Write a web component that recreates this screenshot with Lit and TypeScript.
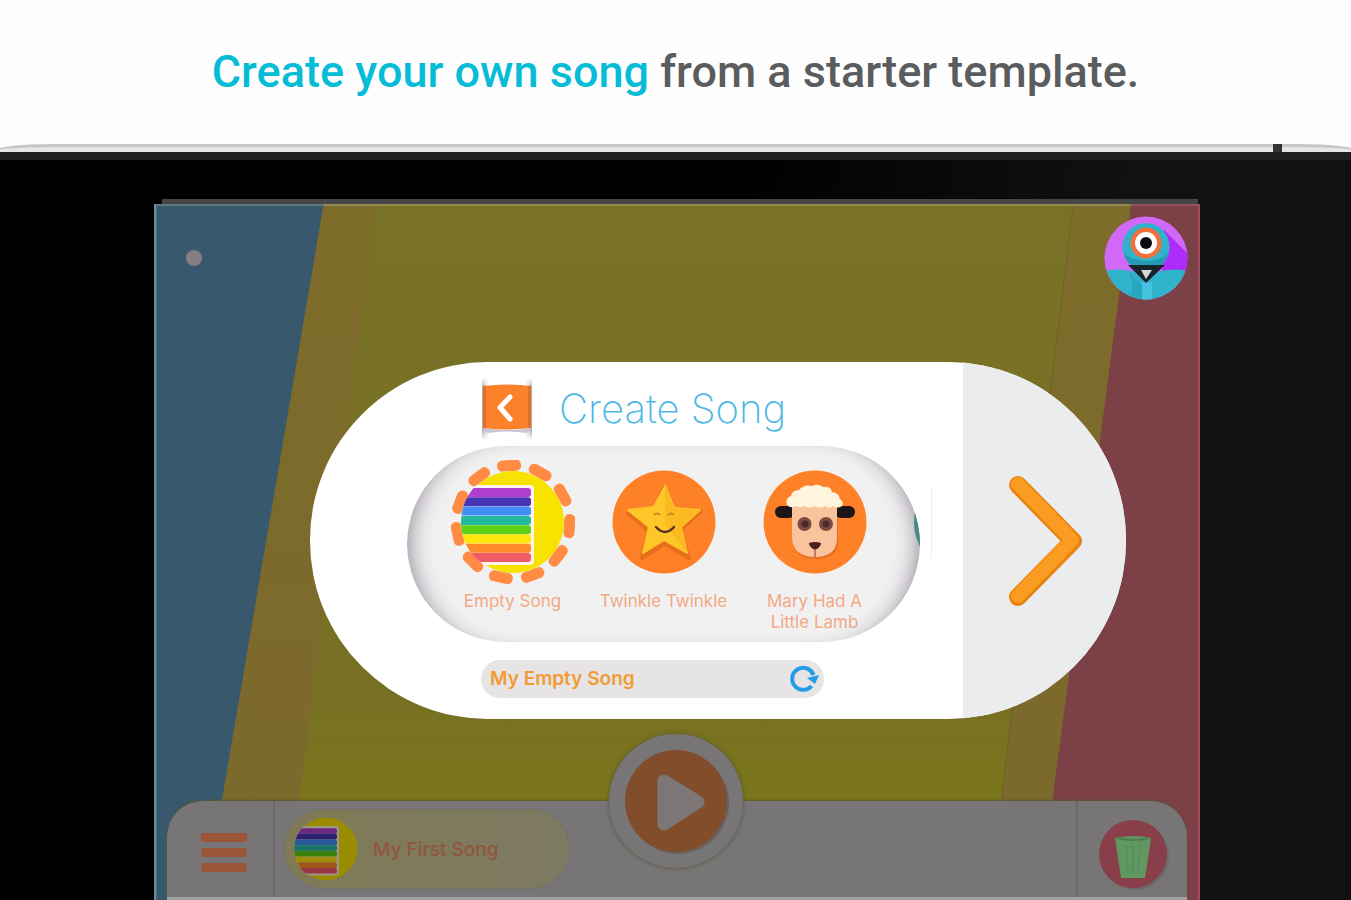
import { LitElement, html, css, svg } from "lit";
import { customElement, state } from "lit/decorators.js";

const STRIPES = ["#b03fd0", "#4a35b5", "#3f8ff5", "#25b9a0", "#5fd018", "#ffe60a", "#ff8a2a", "#f25a68"];

const emptySongArt = () => svg`
  <circle cx="62" cy="62" r="51" fill="#f7e200"></circle>
  <clipPath id="disc"><circle cx="62" cy="62" r="52"></circle></clipPath>
  <g clip-path="url(#disc)">
    <rect x="0" y="25" width="83" height="80" rx="4" fill="#fff3ec"></rect>
    ${STRIPES.map((c, i) => svg`<rect x="4" y=${28 + i * 9.3} width="76" height="9" rx="3" fill=${c}></rect>`)}
  </g>`;

@customElement("song-art")
class SongArt extends LitElement {
  static properties = { kind: { type: String } };
  declare kind: string;

  static styles = css`
    :host { display: block; width: 124px; height: 124px; }
    svg { display: block; width: 100%; height: 100%; }
  `;

  private art() {
    switch (this.kind) {
      case "selected":
        return svg`${Array.from({ length: 11 }, (_, i) => svg`
            <rect x="50" y="0" width="24" height="11" rx="5" fill="#ff8c42"
              transform="rotate(${-4 + (i * 360) / 11} 62 62)"></rect>`)}
          ${emptySongArt()}`;
      case "empty":
        return emptySongArt();
      case "star":
        return svg`<circle cx="62" cy="62" r="51.5" fill="#ff8127"></circle>
          <path d="M62 28 L71 50 L99 51 L78 70 L87 98 L63 84 L40 98 L46 71 L26 53 L52 50Z" fill="#e8701c" stroke="#e8701c" stroke-width="4" stroke-linejoin="round"></path>
          <path d="M63 26 L72 48 L98 50 L79 67 L85 93 L62 80 L41 93 L47 67 L26 50 L52 47Z" fill="#ffc629" stroke="#ffc629" stroke-width="2" stroke-linejoin="round"></path>
          <path d="M63 26 L63 64 L85 93 L79 67 L98 50 L72 48Z" fill="#fbb922"></path>
          <path d="M52 55q3-3 6 0M66 55q3-3 6 0" fill="none" stroke="#c98a20" stroke-width="2"></path>
          <path d="M54 67q9 10 18 0" fill="none" stroke="#5a3226" stroke-width="2.5" stroke-linecap="round"></path>`;
      case "lamb":
        return svg`<circle cx="62" cy="62" r="51.5" fill="#ff8127"></circle>
          <path d="M40 50h45v32q0 17-22 17T40 82z" fill="#e2701f"></path>
          <rect x="22" y="46" width="20" height="12" rx="6" fill="#1d1617"></rect>
          <rect x="82" y="46" width="20" height="12" rx="6" fill="#1d1617"></rect>
          <path d="M39 38h45v40q0 19-22 19T39 78z" fill="#f9c39d"></path>
          <path d="M34 45q-2-7 4-9 1-6 8-6 5-6 13-4 6-3 11 1 8-1 9 5 7 1 8 7 4 3 2 7-4 3-9 0-4 3-8 0-5 3-10 0-6 3-10 0-6 2-10 0-4 3-8-1z" fill="#fff5dc"></path>
          <circle cx="51.5" cy="64" r="7" fill="#7d4a42"></circle><circle cx="73" cy="64" r="7" fill="#7d4a42"></circle>
          <circle cx="52" cy="64" r="3.5" fill="#4a2a2b"></circle><circle cx="73" cy="64" r="3.5" fill="#4a2a2b"></circle>
          <path d="M56 83q6-2 12 0 0 4-6 7-6-3-6-7z" fill="#4a201c"></path>
          <path d="M62 89v8" stroke="#a9694d" stroke-width="1.5"></path>`;
      default:
        return svg`<circle cx="62" cy="62" r="52" fill="#149b74"></circle>`;
    }
  }

  render() {
    return html`<svg viewBox="0 0 124 124" aria-hidden="true">${this.art()}</svg>`;
  }
}

const TEMPLATES = [
  { name: "Empty Song", art: "selected" },
  { name: "Twinkle Twinkle", art: "star" },
  { name: "Mary Had A Little Lamb", art: "lamb" },
  { name: "", art: "more" },
];

@customElement("app-root")
class AppRoot extends LitElement {
  @state() songName = "My Empty Song";

  static styles = css`
    :host {
      display: flex;
      flex-direction: column;
      min-height: 100vh;
      background: #fefefe;
      font-family: Inter, "Open Sans", sans-serif;
      overflow: hidden;
    }
    * { box-sizing: border-box; }
    button { border: 0; padding: 0; background: none; font: inherit; color: inherit; cursor: pointer; }
    svg { display: block; }

    .headline {
      margin: 0;
      height: 144px;
      text-align: center;
      font: 500 45px/144px Roboto, sans-serif;
      color: #5b5c5e;
    }
    .headline em { font-style: normal; color: #06bcd6; }

    .device {
      position: relative;
      flex: 1;
      display: flex;
      flex-direction: column;
      margin: 0 -8px;
      padding: 46px 159px 0 162px;
      border-top: 3px solid #c6c6c6;
      border-radius: 60px 60px 0 0 / 8px 8px 0 0;
      background: linear-gradient(#e6e6e6 0 5px, #1e1e1e 5px 13px, transparent 13px),
        linear-gradient(100deg, #000 50%, #111 76%);
    }
    .notch { position: absolute; right: 77px; top: -3px; width: 9px; height: 8px; background: #333; }
    .bezel { height: 5px; margin: 6px 2px 0 8px; background: #464646; }

    .screen {
      position: relative;
      flex: 1;
      display: flex;
      flex-direction: column;
      border-right: 2px solid #a54a5e;
      overflow: hidden;
    }
    .backdrop { position: absolute; inset: 0; width: 100%; height: 100%; }
    .topbar {
      position: relative;
      display: flex;
      justify-content: space-between;
      align-items: center;
      padding: 12px 10px 0 32px;
    }
    .dot { width: 16px; height: 16px; border-radius: 50%; background: #857d84; }
    .avatar { width: 84px; height: 84px; }

    .dialog {
      position: relative;
      display: flex;
      margin: 62px 72px 24px 156px;
      height: 357px;
      border-radius: 178px;
      background: #fff;
      overflow: hidden;
    }
    .main { flex: 1; padding: 14px 0 0 97px; }
    .title { display: flex; align-items: center; gap: 27px; padding-left: 75px; height: 66px; }
    .back { width: 50px; height: 62px; }
    .title h2 { margin: 0; font: 200 40px/66px Inter, sans-serif; color: #4cb8e6; }
    .tray {
      display: flex;
      width: 513px;
      height: 196px;
      margin: 4px 0 18px;
      padding: 14px 0 0 30px;
      border-radius: 98px;
      background: #f1f1f1;
      overflow: hidden;
      position: relative;
    }
    .tray::after {
      content: "";
      position: absolute;
      inset: 0;
      border-radius: 98px;
      box-shadow: inset 20px 0 24px -20px #85778a, inset -20px 0 24px -20px #85778a;
      pointer-events: none;
    }
    .song {
      flex: 0 0 151px;
      display: flex;
      flex-direction: column;
      align-items: center;
      font-size: 17px;
      line-height: 21px;
      color: #f2a985;
    }
    .song span { width: 144px; margin-top: 7px; text-align: center; }
    .song:nth-child(3) span { width: 112px; }
    .rule { position: absolute; left: 621px; top: 125px; width: 1px; height: 72px; background: #f0f0f0; }
    .name {
      display: flex;
      align-items: center;
      width: 343px;
      height: 38px;
      margin-left: 74px;
      padding: 0 5px 0 9px;
      border-radius: 19px;
      background: #e6e4e5;
    }
    .name input {
      flex: 1;
      min-width: 0;
      border: 0;
      padding: 0;
      background: none;
      outline: 0;
      font: 600 19px/36px Inter, sans-serif;
      color: #f29b35;
    }
    .next {
      flex: 0 0 163px;
      display: grid;
      place-items: center;
      background: #ebecee;
    }

    .dock {
      position: relative;
      display: flex;
      margin: auto 11px 0 13px;
      height: 99px;
      border-bottom: 3px solid #a3a2a3;
      border-radius: 36px 36px 0 0;
      background: #777576;
      box-shadow: 0 -1px 2px #5b5733;
    }
    .menu { flex: 0 0 108px; display: grid; place-items: center; padding: 8px 0 0 8px; border-right: 2px solid #6b696a; }
    .current {
      display: flex;
      align-items: center;
      gap: 9px;
      width: 284px;
      height: 78px;
      margin: 9px 0 0 10px;
      padding-left: 3px;
      border-radius: 39px;
      background: linear-gradient(90deg, #7f7a55, #7d7a62);
      box-shadow: 0 0 3px #716f4e;
      font-size: 19px;
      font-weight: 500;
      color: #94553f;
    }
    .current song-art { width: 76px; height: 76px; filter: brightness(0.62); }
    .trash { flex: 0 0 111px; display: grid; place-items: center; margin-left: auto; padding: 10px 0 0 0; border-left: 2px solid #6a6869; }
    .play {
      position: absolute;
      left: calc(50% - 68px);
      top: -67px;
      width: 134px;
      height: 134px;
      border-radius: 50%;
      background: #777576;
      box-shadow: 0 0 4px #575532;
    }
  `;

  private backdrop() {
    return html`<svg class="backdrop" viewBox="0 0 1046 696" preserveAspectRatio="none" aria-hidden="true">
      <defs>
        <linearGradient id="y" x1="0" y1="0" x2="0" y2="1"><stop offset="0" stop-color="#797226"></stop><stop offset=".7" stop-color="#777024"></stop><stop offset=".86" stop-color="#7b761c"></stop></linearGradient>
        <linearGradient id="b" x1="0" y1="0" x2="0" y2="1"><stop offset="0" stop-color="#7d6c2a"></stop><stop offset=".86" stop-color="#7c692c"></stop></linearGradient>
      </defs>
      <rect width="1046" height="696" fill="#37586d"></rect>
      <path d="M170 0H979V696H51z" fill="url(#b)"></path>
      <path d="M222 0H921L837 696H133z" fill="url(#y)"></path>
      <path d="M921 0L837 696" stroke="#6c6325" stroke-width="1"></path>
      <path d="M979 0H1046V696H887z" fill="#7b4147"></path>
      <path d="M0 1H170" stroke="#5d7781" stroke-width="2"></path>
      <path d="M170 1H979" stroke="#918a50" stroke-width="2"></path>
      <path d="M979 1H1046" stroke="#95525f" stroke-width="2"></path>
      <path d="M1 0V696" stroke="#6a8b99" stroke-width="3"></path>
    </svg>`;
  }

  private avatar() {
    return html`<svg class="avatar" viewBox="0 0 84 84" role="img" aria-label="Robot">
      <defs><clipPath id="a"><circle cx="42" cy="42" r="41.5"></circle></clipPath></defs>
      <g clip-path="url(#a)">
        <rect width="84" height="84" fill="#d168f8"></rect>
        <path d="M60 14L84 38V60H58z" fill="#ad2cfa"></path>
        <path d="M0 55Q12 52 28 55L42 62 56 55Q72 52 84 55V84H0z" fill="#2fb4cb"></path>
        <path d="M24 55L38 69V84H24Q32 72 24 55z" fill="#29a6c0"></path>
        <path d="M38 66H48V84H38z" fill="#46c1e0"></path>
        <ellipse cx="42" cy="31" rx="23.5" ry="24" fill="#31b2cb"></ellipse>
        <path d="M20 38q22 14 44 0-4 16-22 17-17-1-22-17z" fill="#259ab5"></path>
        <path d="M24 49H61L42 67z" fill="#18232c"></path>
        <path d="M37 54H48L42 63z" fill="#d4dad3"></path>
      </g>
      <circle cx="42" cy="27" r="15.5" fill="#f0713c"></circle>
      <circle cx="42" cy="27" r="11" fill="#fff"></circle>
      <circle cx="42" cy="27" r="6" fill="#0a0a10"></circle>
    </svg>`;
  }

  render() {
    return html`
      <h1 class="headline"><em>Create your own song</em> from a starter template.</h1>
      <div class="device">
        <i class="notch"></i>
        <div class="bezel"></div>
        <main class="screen">
          ${this.backdrop()}
          <div class="topbar"><i class="dot"></i>${this.avatar()}</div>

          <section class="dialog">
            <div class="main">
              <div class="title">
                <button class="back" aria-label="Back">
                  <svg width="50" height="62" viewBox="0 0 50 62">
                    <defs>
                      <linearGradient id="fold" x1="0" y1="0" x2="1" y2="0">
                        <stop offset="0" stop-color="#a9a6b4"></stop><stop offset=".14" stop-color="#fff"></stop>
                        <stop offset=".86" stop-color="#fff"></stop><stop offset="1" stop-color="#a9a6b4"></stop>
                      </linearGradient>
                      <linearGradient id="fade" x1="0" y1="0" x2="0" y2="1">
                        <stop offset="0" stop-color="#fff"></stop><stop offset=".15" stop-color="#fff" stop-opacity="0"></stop>
                        <stop offset=".85" stop-color="#fff" stop-opacity="0"></stop><stop offset="1" stop-color="#fff"></stop>
                      </linearGradient>
                    </defs>
                    <rect width="50" height="62" fill="url(#fold)"></rect>
                    <rect width="50" height="62" fill="url(#fade)"></rect>
                    <path d="M1 50Q25 54 49 50L45 55Q25 52 5 55z" fill="#c9c6d4"></path>
                    <path d="M1 8Q25 5 49 8V50Q25 53 1 50z" fill="#fb812b"></path>
                    <path d="M1 8H4V50H1zM46 8H49V50H46z" fill="#c9601f" opacity=".5"></path>
                    <path d="M28 19L18 29.5 28 41" fill="none" stroke="#fff" stroke-width="5" stroke-linecap="round" stroke-linejoin="round"></path>
                  </svg>
                </button>
                <h2>Create Song</h2>
              </div>
              <div class="tray">
                ${TEMPLATES.map((t) => html`<button class="song" aria-label=${t.name || "More"}>
                  <song-art kind=${t.art}></song-art><span>${t.name}</span>
                </button>`)}
              </div>
              <i class="rule"></i>
              <div class="name">
                <input aria-label="Song name" .value=${this.songName} />
                <button aria-label="New name" @click=${() => (this.songName = "My Empty Song")}>
                  <svg width="30" height="30" viewBox="0 0 30 30">
                    <path d="M22.5 22A11 11 0 1 1 24.5 11" fill="none" stroke="#239be9" stroke-width="4"></path>
                    <path d="M18 14L30 11 26 20z" fill="#239be9"></path>
                  </svg>
                </button>
              </div>
            </div>
            <button class="next" aria-label="Next">
              <svg width="76" height="134" viewBox="0 0 76 134">
                <path d="M11 11L66 67 11 123" fill="none" stroke="#e8830f" stroke-width="18" stroke-linecap="round" stroke-linejoin="round"></path>
                <path d="M11 10L65 66 11 122" fill="none" stroke="#fa9c22" stroke-width="14" stroke-linecap="round" stroke-linejoin="round"></path>
              </svg>
            </button>
          </section>

          <footer class="dock">
            <button class="menu" aria-label="Menu">
              <svg width="48" height="44" viewBox="0 0 48 44" fill="#9b5639">
                <rect x="1" y="2" width="46" height="9" rx="2"></rect>
                <rect x="1" y="17" width="46" height="9" rx="2"></rect>
                <rect x="1" y="32" width="46" height="9" rx="2"></rect>
              </svg>
            </button>
            <button class="current"><song-art kind="empty"></song-art>My First Song</button>
            <button class="trash" aria-label="Delete">
              <svg width="72" height="72" viewBox="0 0 72 72">
                <circle cx="38" cy="38" r="34" fill="#6c6a6b"></circle>
                <circle cx="36" cy="36" r="34" fill="#883f49"></circle>
                <path d="M18 20Q36 16 54 20L48 60H24z" fill="#619760"></path>
                <path d="M20 20Q36 24 52 20" fill="none" stroke="#4d7f4e" stroke-width="2"></path>
                <path d="M29 27L31 56M36 27V56M43 27L41 56" stroke="#5a8f5b" stroke-width="2"></path>
              </svg>
            </button>
            <button class="play" aria-label="Play">
              <svg width="134" height="134" viewBox="0 0 134 134">
                <circle cx="69" cy="69" r="51" fill="#686061"></circle>
                <circle cx="67" cy="67" r="51" fill="#824d2a"></circle>
                <path d="M55 47V90L89 68z" fill="#7c7776" stroke="#7c7776" stroke-width="13" stroke-linejoin="round"></path>
              </svg>
            </button>
          </footer>
        </main>
      </div>`;
  }
}
